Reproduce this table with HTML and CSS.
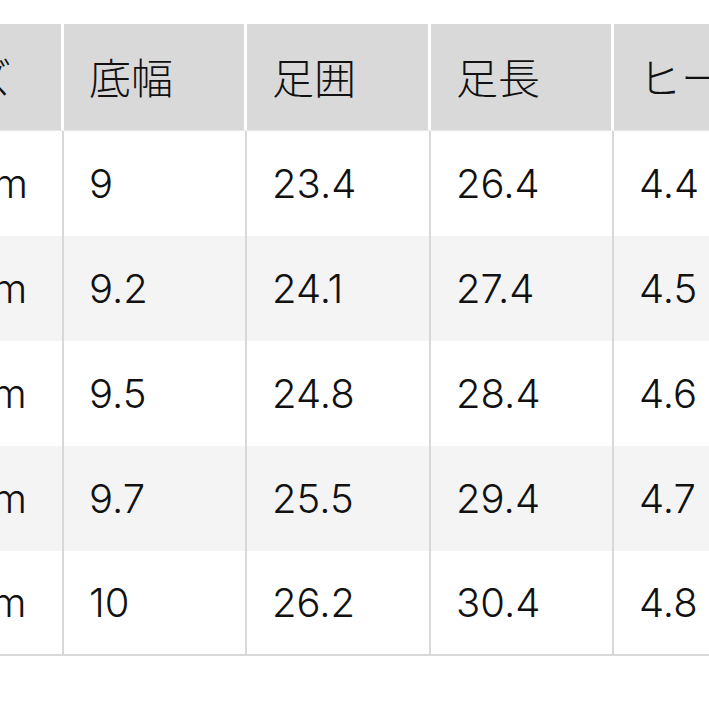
FILE: index.html
```html
<!DOCTYPE html>
<html lang="ja">
<head>
<meta charset="utf-8">
<link rel="stylesheet" href="styles.css">
</head>
<body>
<div class="viewport">
  <div class="table">
    <div class="cell head">サイズ</div>
    <div class="cell head">底幅</div>
    <div class="cell head">足囲</div>
    <div class="cell head">足長</div>
    <div class="cell head">ヒール</div>

    <div class="cell">22.5cm</div>
    <div class="cell">9</div>
    <div class="cell">23.4</div>
    <div class="cell">26.4</div>
    <div class="cell">4.4</div>

    <div class="cell alt">23.0cm</div>
    <div class="cell alt">9.2</div>
    <div class="cell alt">24.1</div>
    <div class="cell alt">27.4</div>
    <div class="cell alt">4.5</div>

    <div class="cell">23.5cm</div>
    <div class="cell">9.5</div>
    <div class="cell">24.8</div>
    <div class="cell">28.4</div>
    <div class="cell">4.6</div>

    <div class="cell alt">24.0cm</div>
    <div class="cell alt">9.7</div>
    <div class="cell alt">25.5</div>
    <div class="cell alt">29.4</div>
    <div class="cell alt">4.7</div>

    <div class="cell last">24.5cm</div>
    <div class="cell last">10</div>
    <div class="cell last">26.2</div>
    <div class="cell last">30.4</div>
    <div class="cell last">4.8</div>
  </div>
</div>
</body>
</html>
```

FILE: styles.css
```css
html, body {
  margin: 0;
  padding: 0;
  background: #ffffff;
}

.viewport {
  width: 709px;
  height: 709px;
  overflow: hidden;
  padding-top: 24px;
  box-sizing: border-box;
}

.table {
  margin-left: -138px;
  display: grid;
  grid-template-columns: 202px 183px 184px 183px 183px;
  grid-auto-rows: 105px;
  grid-template-rows: 107px;
  font-family: Inter, "Noto Sans CJK JP", sans-serif;
  font-weight: 300;
  font-size: 40px;
  color: #111111;
  width: 935px;
}

.cell {
  box-sizing: border-box;
  display: flex;
  align-items: center;
  padding-left: 25px;
  white-space: nowrap;
  border-right: 2px solid #d8d8d8;
  background: #ffffff;
  line-height: 1;
}

.head {
  background: #d9d9d9;
  border-right: 3px solid #ffffff;
  border-bottom: 1px solid #e6e6e6;
  padding-top: 4px;
  font-size: 42px;
}

.alt {
  background: #f4f4f4;
}

.last {
  border-bottom: 2px solid #d8d8d8;
}
```
